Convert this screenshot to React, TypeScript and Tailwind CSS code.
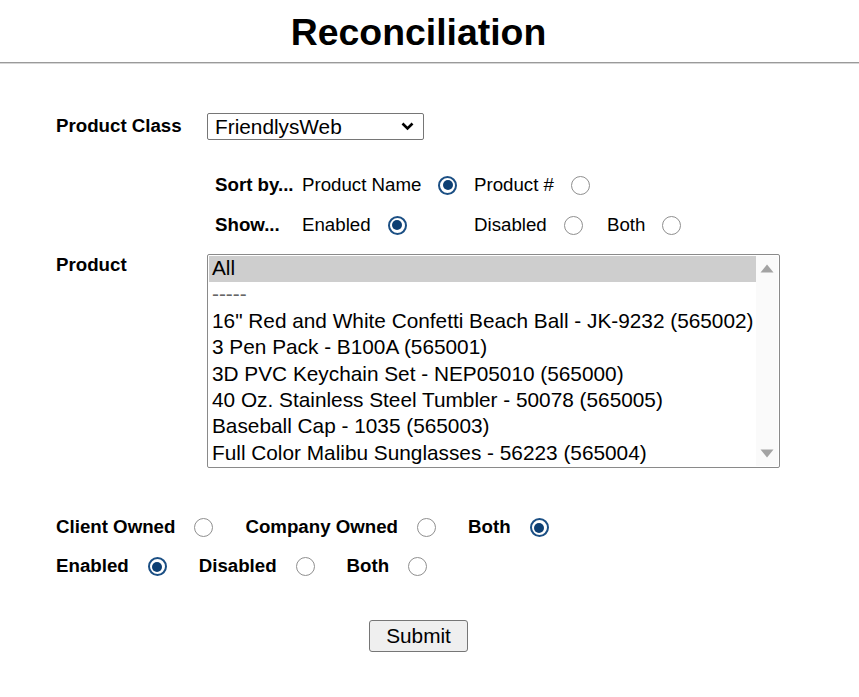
import React from "react";

const products = [
    "All",
    "-----",
    '16" Red and White Confetti Beach Ball - JK-9232 (565002)',
    "3 Pen Pack - B100A (565001)",
    "3D PVC Keychain Set - NEP05010 (565000)",
    "40 Oz. Stainless Steel Tumbler - 50078 (565005)",
    "Baseball Cap - 1035 (565003)",
    "Full Color Malibu Sunglasses - 56223 (565004)",
];

function Radio({ checked = false }: { checked?: boolean }) {
    if (checked) {
        return (
            <span className="w-[19px] h-[19px] rounded-full border-2 border-[#1b4f84] bg-white flex items-center justify-center flex-shrink-0">
                <span className="w-[10px] h-[10px] rounded-full bg-[#0d3f73]" />
            </span>
        );
    }
    return <span className="w-[19px] h-[19px] rounded-full border-[1.5px] border-[#8f8f8f] bg-white flex-shrink-0" />;
}

function Choice({ label, checked, bold }: { label: string; checked?: boolean; bold?: boolean }) {
    return (
        <div className={`flex items-center ${bold ? "font-bold gap-[19px]" : "gap-[17px]"}`}>
            <span>{label}</span>
            <Radio checked={checked} />
        </div>
    );
}

export default function App() {
    return (
        <div className="w-[837px] bg-white text-black font-['Liberation_Sans',Arial,sans-serif] text-[18.7px]">
            <h1 className="text-center text-[37.4px] font-bold leading-[42px] pt-[11px]">Reconciliation</h1>
            <div className="mt-[9px] w-[859px] border-t border-t-[#9a9a9a] border-b border-b-[#d6d6d6]" />

            <div className="pl-[56px]">
                {/* product class */}
                <div className="mt-[49px] flex items-center h-[27px]">
                    <span className="w-[151px] font-bold">Product Class</span>
                    <div className="w-[217px] h-[27px] border border-[#767676] rounded-[2px] flex items-center justify-between pl-[7px] pr-[9px] text-[20.8px]">
                        <span>FriendlysWeb</span>
                        <svg width="13" height="9" viewBox="0 0 13 9">
                            <polyline points="1.5,1.5 6.5,6.5 11.5,1.5" fill="none" stroke="#000" strokeWidth="2.6" />
                        </svg>
                    </div>
                </div>

                {/* sort / show */}
                <div className="mt-[31px] pl-[159px] grid grid-cols-[87px_172px_133px_auto] h-[27px] items-center">
                    <span className="font-bold">Sort by...</span>
                    <Choice label="Product Name" checked />
                    <Choice label="Product #" />
                    <span />
                </div>
                <div className="mt-[13px] pl-[159px] grid grid-cols-[87px_172px_133px_auto] h-[27px] items-center">
                    <span className="font-bold">Show...</span>
                    <Choice label="Enabled" checked />
                    <Choice label="Disabled" />
                    <Choice label="Both" />
                </div>

                {/* product list */}
                <div className="mt-[16px] flex items-start">
                    <span className="w-[151px] font-bold leading-[21px]">Product</span>
                    <div className="w-[573px] h-[214px] border border-[#8a8a8a] rounded-[2px] flex p-px text-[20.8px]">
                        <div className="flex-1 overflow-hidden">
                            {products.map((p, i) => (
                                <div
                                    key={p}
                                    className={`h-[26.4px] leading-[24px] pl-[3px] whitespace-nowrap ${
                                        i === 0 ? "bg-[#cecece]" : ""
                                    } ${i === 1 ? "text-[#666]" : ""}`}
                                >
                                    {p}
                                </div>
                            ))}
                        </div>
                        <div className="w-[22px] bg-[#fafafa] flex flex-col items-center justify-between py-[8px]">
                            <svg width="14" height="9" viewBox="0 0 14 9">
                                <polygon points="7,0.5 13.5,8.5 0.5,8.5" fill="#a3a3a3" />
                            </svg>
                            <svg width="14" height="9" viewBox="0 0 14 9">
                                <polygon points="0.5,0.5 13.5,0.5 7,8.5" fill="#a3a3a3" />
                            </svg>
                        </div>
                    </div>
                </div>

                {/* ownership */}
                <div className="mt-[46px] flex items-center gap-[32px] h-[27px]">
                    <Choice label="Client Owned" bold />
                    <Choice label="Company Owned" bold />
                    <Choice label="Both" bold checked />
                </div>
                <div className="mt-[12px] flex items-center gap-[32px] h-[27px]">
                    <Choice label="Enabled" bold checked />
                    <Choice label="Disabled" bold />
                    <Choice label="Both" bold />
                </div>
            </div>

            <div className="mt-[40px] pb-[46px] flex justify-center">
                <button className="w-[99px] h-[32px] bg-[#efefef] border border-[#767676] rounded-[3px] text-[20.8px] leading-none">
                    Submit
                </button>
            </div>
        </div>
    );
}
